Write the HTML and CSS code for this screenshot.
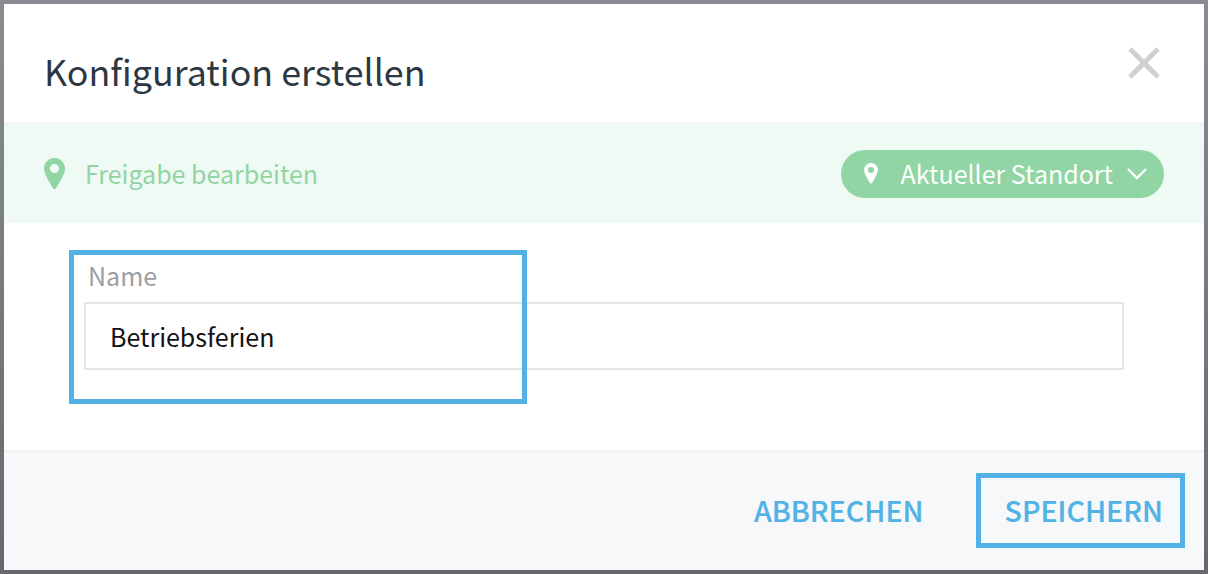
FILE: index.html
```html
<!DOCTYPE html>
<html lang="de">
<head>
    <meta charset="UTF-8">
    <meta name="viewport" content="width=device-width, initial-scale=1.0">
    <title>Konfiguration erstellen</title>
    <link rel="stylesheet" href="styles.css">
</head>
<body>
    <div class="modal">
        <div class="modal-header">
            <h1 class="modal-title">Konfiguration erstellen</h1>
            <svg class="close-icon" width="34" height="34" viewBox="0 0 34 34">
                <path d="M3 3L31 31M31 3L3 31" stroke="#d0d0d0" stroke-width="5" fill="none"/>
            </svg>
        </div>

        <div class="share-bar">
            <div class="share-label">
                <svg class="pin-large" width="21" height="32" viewBox="0 0 21 32">
                    <path fill-rule="evenodd" fill="#90d5a3" d="M10.5 0C4.7 0 0 4.7 0 10.5c0 6 6.400 14.900 8.900 19.800 .7 1.300 2.500 1.300 3.200 0C14.600 25.400 21 16.500 21 10.500 21 4.700 16.300 0 10.500 0zM10.500 6a4.600 4.600 0 1 1 0 9.200 4.600 4.600 0 0 1 0-9.200z"/>
                </svg>
                <span class="share-text">Freigabe bearbeiten</span>
            </div>
            <div class="location-pill">
                <svg class="pin-small" width="16" height="21" viewBox="0 0 21 32">
                    <path fill-rule="evenodd" fill="#fff" d="M10.500 0C4.700 0 0 4.700 0 10.500c0 6 6.400 14.900 8.900 19.800 .7 1.300 2.500 1.300 3.200 0C14.600 25.400 21 16.500 21 10.500 21 4.700 16.300 0 10.500 0zM10.500 6a4.600 4.600 0 1 1 0 9.200 4.600 4.600 0 0 1 0-9.200z"/>
                </svg>
                <span class="share-text">Aktueller Standort</span>
                <svg class="chevron" width="22" height="15" viewBox="0 0 22 15">
                    <path d="M2 3L11 12L20 3" stroke="#fff" stroke-width="2.400" fill="none"/>
                </svg>
            </div>
        </div>

        <div class="modal-body">
            <label class="field-label" for="config-name">Name</label>
            <input class="field-input" id="config-name" type="text" value="Betriebsferien">
            <div class="name-highlight"></div>
        </div>

        <div class="modal-footer">
            <button class="footer-btn">ABBRECHEN</button>
            <button class="footer-btn footer-btn-marked">SPEICHERN</button>
        </div>
    </div>
</body>
</html>
```

FILE: styles.css
```css
html, body {
    height: 100%;
}
body {
    margin: 0;
    padding: 4px;
    box-sizing: border-box;
    overflow: hidden;
    background: linear-gradient(#8b8c92, #66686c);
    font-family: "Noto Sans CJK SC", "Noto Sans", sans-serif;
}
.modal {
    display: flex;
    flex-direction: column;
    height: 566px;
    background-color: white;
}
.modal-header {
    display: flex;
    justify-content: space-between;
    align-items: flex-start;
    box-sizing: border-box;
    height: 120px;
    padding: 42px 43px 0 40px;
    border-bottom: 2px solid #f2f4f5;
}
.modal-title {
    margin: -3px 0 0 0;
    font-size: 35.800px;
    font-weight: 400;
    line-height: 54px;
    color: #2d3742;
}
.share-bar {
    display: flex;
    justify-content: space-between;
    align-items: center;
    box-sizing: border-box;
    height: 99px;
    padding: 0 40px 0 40px;
    background-color: #f0faf4;
}
.share-label {
    display: flex;
    align-items: center;
    gap: 20px;
    font-size: 25px;
    color: #90d5a3;
}
.share-text {
    padding-bottom: 2px;
}
.location-pill {
    display: flex;
    align-items: center;
    height: 48px;
    padding: 0 16px 0 22px;
    border-radius: 24px;
    background-color: #90d5a3;
    font-size: 25px;
    color: white;
}
.pin-small {
    margin-right: 22px;
}
.chevron {
    margin-left: 13px;
}
.modal-body {
    position: relative;
    flex: 1;
    padding: 38px 80px 0 80px;
}
.field-label {
    display: block;
    height: 41px;
    padding-left: 4px;
    font-size: 25px;
    line-height: 28px;
    color: #9a9ea3;
}
.field-input {
    display: block;
    box-sizing: border-box;
    width: 100%;
    height: 68px;
    padding: 0 24px;
    border: 2px solid #e1e6ea;
    outline: none;
    font-family: inherit;
    font-size: 25px;
    color: #111;
}
.name-highlight {
    position: absolute;
    left: 65px;
    top: 27px;
    width: 458px;
    height: 154px;
    box-sizing: border-box;
    border: 5px solid #52b2e5;
}
.modal-footer {
    display: flex;
    justify-content: flex-end;
    align-items: center;
    gap: 30px;
    box-sizing: border-box;
    height: 120px;
    padding: 0 19px 2px 0;
    border-top: 2px solid #f1f2f4;
    background-color: #f7f8fa;
}
.footer-btn {
    height: 75px;
    padding: 0 17px 2px 24px;
    border: 5px solid transparent;
    background: none;
    font-family: inherit;
    font-size: 28.600px;
    font-weight: 500;
    -webkit-text-stroke: 0.200px #52b2e5;
    color: #52b2e5;
    cursor: pointer;
}
.footer-btn-marked {
    border-color: #52b2e5;
}
```
